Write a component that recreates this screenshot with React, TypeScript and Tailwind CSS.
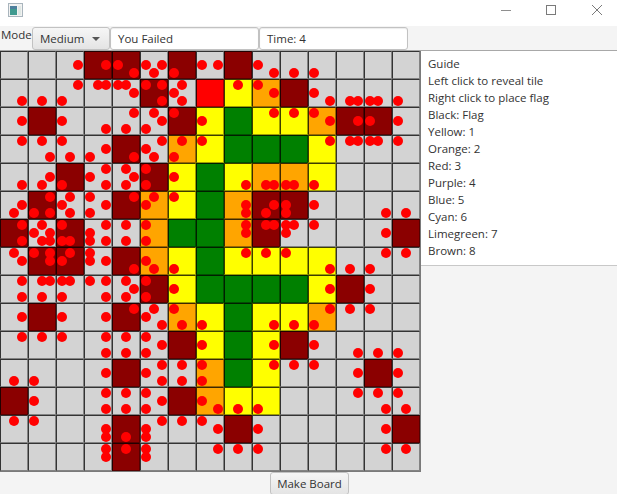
const BOARD = [
  "gggDDgDgDgggggg",
  "gggggDgRYODgggg",
  "gDggggDYGYYODDg",
  "ggggDgOYGGGYggg",
  "ggDggDYGYOOYggg",
  "gDggDOYGODDgggg",
  "DgDggOGGODggggD",
  "gDDgDOYGYYYYggg",
  "gggggDYGGGGYDgg",
  "gDggDgOYGYYOggg",
  "ggggggDYGYDgggg",
  "ggggDggOGYgggDg",
  "DgggggDOYYggggg",
  "ggggDgggDgggggD",
  "ggggDgggggggggg",
];

const CELL_CLASS: Record<string, string> = {
  g: "bg-[#d3d3d3]",
  D: "bg-[#8b0000]",
  R: "bg-[#ff0000]",
  Y: "bg-[#ffff00]",
  O: "bg-[#ffa500]",
  G: "bg-[#008000]",
};

const OFFSETS = [
  [-20, -20], [0, -20], [20, -20],
  [-20, 0], [20, 0],
  [-20, 20], [0, 20], [20, 20],
];

const GUIDE = [
  "Guide",
  "Left click to reveal tile",
  "Right click to place flag",
  "Black: Flag",
  "Yellow: 1",
  "Orange: 2",
  "Red: 3",
  "Purple: 4",
  "Blue: 5",
  "Cyan: 6",
  "Limegreen: 7",
  "Brown: 8",
];

function Board() {
  const dots: { x: number; y: number }[] = [];
  BOARD.forEach((row, r) => {
    row.split("").forEach((c, col) => {
      if (c === "D") {
        OFFSETS.forEach(([dx, dy]) => dots.push({ x: col * 28 + 14 + dx, y: r * 28 + 14 + dy }));
      }
    });
  });
  return (
    <div className="relative h-[421px] w-[421px] shrink-0 overflow-hidden border-b border-r border-b-[#00000080] border-r-[#00000080]">
      <div className="grid grid-cols-[repeat(15,28px)] grid-rows-[repeat(15,28px)]">
        {BOARD.flatMap((row, r) =>
          row.split("").map((c, col) => (
            <div
              key={`${r}-${col}`}
              className={`border border-b-[#00000060] border-l-[#000000c0] border-r-[#00000060] border-t-[#000000c0] ${CELL_CLASS[c]}`}
            />
          )),
        )}
      </div>
      <svg className="absolute left-0 top-0 h-[420px] w-[420px]" viewBox="0 0 420 420">
        {dots.map((d, i) => (
          <circle key={i} cx={d.x} cy={d.y} r={5} fill="#ff0000" />
        ))}
      </svg>
    </div>
  );
}

export default function App() {
  return (
    <div className="flex h-[494px] w-[617px] flex-col overflow-hidden bg-[#f4f4f4] font-['Open_Sans','Noto_Sans',sans-serif] text-[11.5px] text-[#333333]">
      <div className="flex h-[26px] shrink-0 items-start justify-between bg-white">
        <svg className="ml-[8px] mt-[3px]" width="15" height="14" viewBox="0 0 15 14">
          <rect x="0.5" y="0.5" width="14" height="13" fill="#f2f2f2" stroke="#a9b5bd" />
          <rect x="2" y="3" width="7" height="9" fill="#3f9a8f" />
          <rect x="2" y="3" width="7" height="3" fill="#4d7f9d" />
          <rect x="10" y="3" width="3" height="9" fill="#dfe8e4" />
        </svg>
        <div className="mt-[5px] flex items-start gap-[35px] pr-[15px]">
          <svg width="10" height="10" viewBox="0 0 10 10">
            <path d="M0 5.5h10" stroke="#8f8f8f" fill="none" />
          </svg>
          <svg width="10" height="10" viewBox="0 0 10 10">
            <rect x="0.5" y="0.5" width="9" height="9" stroke="#7a7a7a" fill="none" />
          </svg>
          <svg width="10" height="10" viewBox="0 0 10 10" className="ml-px">
            <path d="M0 0l10 10M10 0L0 10" stroke="#7a7a7a" fill="none" />
          </svg>
        </div>
      </div>
      <div className="flex h-[25px] shrink-0 items-start border-b border-[#a8a8a8] pt-px">
        <span className="ml-px w-[31px] leading-[16px]">Mode</span>
        <div className="flex h-[23px] w-[78px] items-center justify-between rounded-[3px] border border-[#c2c2c2] bg-gradient-to-b from-[#f6f6f6] to-[#e4e4e4] pl-[7px] pr-[9px]">
          <span>Medium</span>
          <span className="h-0 w-0 border-x-[4px] border-t-[4px] border-x-transparent border-t-[#555555]" />
        </div>
        <div className="flex h-[23px] w-[149px] items-center rounded-[3px] border border-[#c2c2c2] bg-white pl-[7px] shadow-[inset_0_1px_1px_#00000014]">You Failed</div>
        <div className="flex h-[23px] w-[149px] items-center rounded-[3px] border border-[#c2c2c2] bg-white pl-[7px] shadow-[inset_0_1px_1px_#00000014]">Time: 4</div>
      </div>
      <div className="flex h-[421px] shrink-0 items-start">
        <Board />
        <div className="flex h-[215px] flex-1 flex-col border-b border-[#c8c8c8] bg-white pl-[7px] pt-[4px]">
          {GUIDE.map((t) => (
            <div key={t} className="h-[17px] leading-[17px]">{t}</div>
          ))}
        </div>
      </div>
      <div className="flex h-[22px] shrink-0 items-start justify-center overflow-hidden pl-[2px]">
        <div className="flex h-[23px] w-[79px] items-center justify-center rounded-[3px] border border-[#c2c2c2] bg-gradient-to-b from-[#f6f6f6] to-[#e4e4e4]">
          Make Board
        </div>
      </div>
    </div>
  );
}
